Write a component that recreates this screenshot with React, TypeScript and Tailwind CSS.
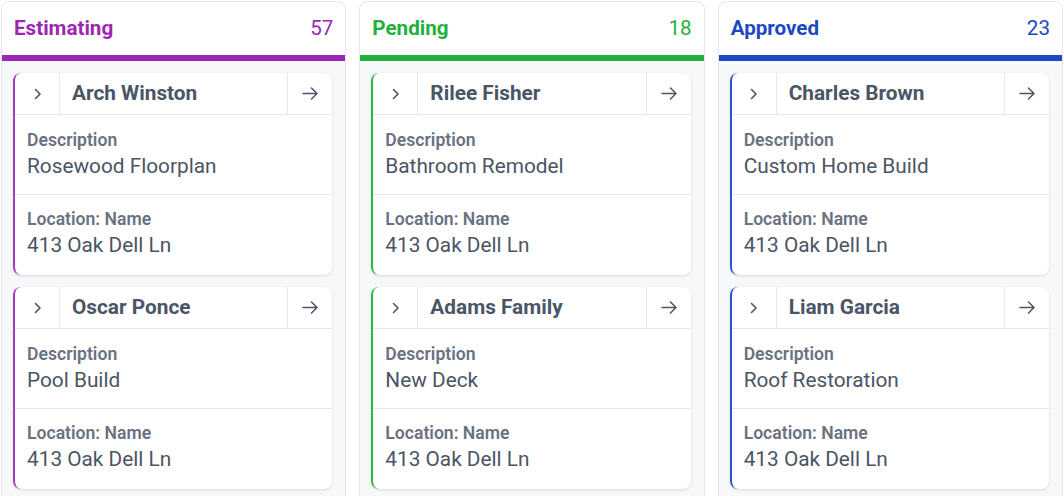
const columns = [
  {
    title: 'Estimating',
    count: 57,
    text: 'text-[#9c27b0]',
    bar: 'bg-[#9c27b0]',
    edge: 'border-l-[#a63bbb]',
    cards: [
      { name: 'Arch Winston', description: 'Rosewood Floorplan', location: '413 Oak Dell Ln' },
      { name: 'Oscar Ponce', description: 'Pool Build', location: '413 Oak Dell Ln' },
    ],
  },
  {
    title: 'Pending',
    count: 18,
    text: 'text-[#1fb13c]',
    bar: 'bg-[#1fb13c]',
    edge: 'border-l-[#2bb846]',
    cards: [
      { name: 'Rilee Fisher', description: 'Bathroom Remodel', location: '413 Oak Dell Ln' },
      { name: 'Adams Family', description: 'New Deck', location: '413 Oak Dell Ln' },
    ],
  },
  {
    title: 'Approved',
    count: 23,
    text: 'text-[#1e48c2]',
    bar: 'bg-[#1e48c2]',
    edge: 'border-l-[#2f56c6]',
    cards: [
      { name: 'Charles Brown', description: 'Custom Home Build', location: '413 Oak Dell Ln' },
      { name: 'Liam Garcia', description: 'Roof Restoration', location: '413 Oak Dell Ln' },
    ],
  },
];

type Card = { name: string; description: string; location: string };

function Chevron() {
  return (
    <svg width="9" height="12" viewBox="0 0 9 12" fill="none" aria-hidden="true">
      <path d="M2.5 1.5 7 6l-4.5 4.5" stroke="#4b5563" strokeWidth="1.6" strokeLinecap="round" strokeLinejoin="round" />
    </svg>
  );
}

function Arrow() {
  return (
    <svg width="16" height="13" viewBox="0 0 16 13" fill="none" aria-hidden="true">
      <path d="M1 6.5h14M9.5 1 15 6.5 9.5 12" stroke="#4b5563" strokeWidth="1.5" strokeLinecap="round" strokeLinejoin="round" />
    </svg>
  );
}

function JobCard({ card, edge }: { card: Card; edge: string }) {
  return (
    <div className={`rounded-lg border-l-2 bg-white shadow-[0_1px_3px_rgba(0,0,0,0.12)] ${edge}`}>
      <div className="flex h-[42px] border-b border-gray-200">
        <div className="flex w-[45px] items-center justify-center border-r border-gray-200">
          <Chevron />
        </div>
        <div className="flex flex-1 items-center pl-[12px] text-[20.8px] font-bold text-gray-600">{card.name}</div>
        <div className="flex w-[45px] items-center justify-center border-l border-gray-200">
          <Arrow />
        </div>
      </div>
      <div className="border-b border-gray-200 px-3 pt-[13px] pb-[14px]">
        <div className="text-[17.6px] leading-6 font-semibold text-gray-500">Description</div>
        <div className="text-[20.8px] leading-7 text-gray-600">{card.description}</div>
      </div>
      <div className="px-3 pt-[12px] pb-[16px]">
        <div className="text-[17.6px] leading-6 font-semibold text-gray-500">Location: Name</div>
        <div className="text-[20.8px] leading-7 text-gray-600">{card.location}</div>
      </div>
    </div>
  );
}

export default function App() {
  return (
    <div className="h-[496px] overflow-hidden bg-white p-px font-['Roboto',sans-serif]">
      <div className="grid grid-cols-3 gap-[13px]">
        {columns.map((col) => (
          <div key={col.title} className="flex h-[540px] flex-col rounded-t-lg border border-gray-200 bg-[#f7f8fa]">
            <div className="flex items-center justify-between rounded-t-lg bg-white px-3 pt-3 pb-[13px]">
              <span className={`text-[20.6px] leading-7 font-bold ${col.text}`}>{col.title}</span>
              <span className={`text-[20.6px] leading-7 ${col.text}`}>{col.count}</span>
            </div>
            <div className={`h-1.5 ${col.bar}`} />
            <div className="flex flex-col gap-3 pt-3 pr-[13px] pb-3 pl-[11px]">
              {col.cards.map((card) => (
                <JobCard key={card.name} card={card} edge={col.edge} />
              ))}
            </div>
          </div>
        ))}
      </div>
    </div>
  );
}
